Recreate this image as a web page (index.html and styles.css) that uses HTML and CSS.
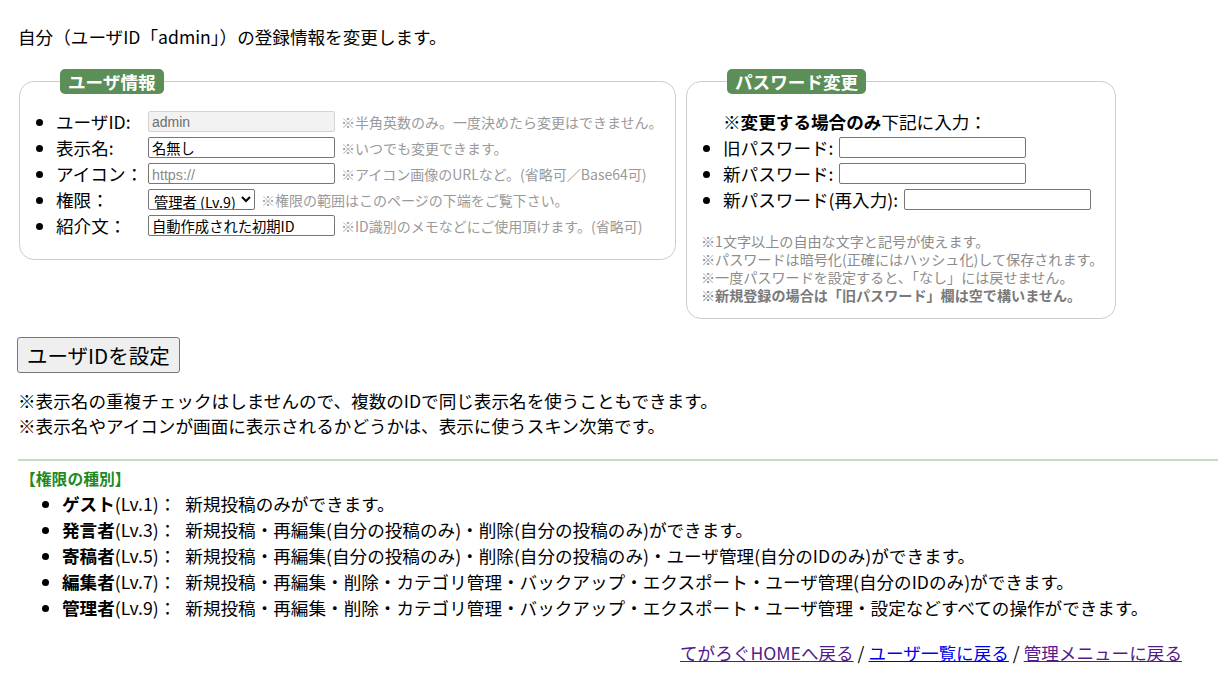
FILE: index.html
```html
<!DOCTYPE html>
<html lang="ja">
<head>
    <meta charset="UTF-8">
    <title>ユーザ情報の変更</title>
    <link rel="stylesheet" href="styles.css">
</head>
<body>
    <div class="wrap">
        <p class="lead">自分（ユーザID「admin」）の登録情報を変更します。</p>

        <form class="panels">
            <fieldset class="box box-user">
                <legend>ユーザ情報</legend>
                <ul class="fields">
                    <li>
                        <label class="lbl">ユーザID:</label>
                        <input type="text" class="txt" value="admin" disabled>
                        <span class="note">※半角英数のみ。一度決めたら変更はできません。</span>
                    </li>
                    <li>
                        <label class="lbl">表示名:</label>
                        <input type="text" class="txt" value="名無し">
                        <span class="note">※いつでも変更できます。</span>
                    </li>
                    <li>
                        <label class="lbl">アイコン：</label>
                        <input type="text" class="txt" placeholder="https://">
                        <span class="note">※アイコン画像のURLなど。(省略可／Base64可)</span>
                    </li>
                    <li>
                        <label class="lbl">権限：</label>
                        <select class="sel">
                            <option>管理者 (Lv.9)</option>
                        </select>
                        <span class="note">※権限の範囲はこのページの下端をご覧下さい。</span>
                    </li>
                    <li>
                        <label class="lbl">紹介文：</label>
                        <input type="text" class="txt" value="自動作成された初期ID">
                        <span class="note">※ID識別のメモなどにご使用頂けます。(省略可)</span>
                    </li>
                </ul>
            </fieldset>

            <fieldset class="box box-pass">
                <legend>パスワード変更</legend>
                <p class="only">※<b>変更する場合のみ</b>下記に入力：</p>
                <ul class="fields pass-fields">
                    <li>旧パスワード: <input type="password" class="txt"></li>
                    <li>新パスワード: <input type="password" class="txt"></li>
                    <li>新パスワード(再入力): <input type="password" class="txt"></li>
                </ul>
                <p class="pass-notes">
                    ※1文字以上の自由な文字と記号が使えます。<br>
                    ※パスワードは暗号化(正確にはハッシュ化)して保存されます。<br>
                    ※一度パスワードを設定すると、「なし」には戻せません。<br>
                    <b>※新規登録の場合は「旧パスワード」欄は空で構いません。</b>
                </p>
            </fieldset>
        </form>

        <button type="button" class="submit">ユーザIDを設定</button>

        <p class="remarks">
            ※表示名の重複チェックはしませんので、複数のIDで同じ表示名を使うこともできます。<br>
            ※表示名やアイコンが画面に表示されるかどうかは、表示に使うスキン次第です。
        </p>

        <hr class="sep">

        <p class="levels-title">【権限の種別】</p>
        <ul class="levels">
            <li><b>ゲスト</b>(Lv.1)：<span class="desc">新規投稿のみができます。</span></li>
            <li><b>発言者</b>(Lv.3)：<span class="desc">新規投稿・再編集(自分の投稿のみ)・削除(自分の投稿のみ)ができます。</span></li>
            <li><b>寄稿者</b>(Lv.5)：<span class="desc">新規投稿・再編集(自分の投稿のみ)・削除(自分の投稿のみ)・ユーザ管理(自分のIDのみ)ができます。</span></li>
            <li><b>編集者</b>(Lv.7)：<span class="desc">新規投稿・再編集・削除・カテゴリ管理・バックアップ・エクスポート・ユーザ管理(自分のIDのみ)ができます。</span></li>
            <li><b>管理者</b>(Lv.9)：<span class="desc">新規投稿・再編集・削除・カテゴリ管理・バックアップ・エクスポート・ユーザ管理・設定などすべての操作ができます。</span></li>
        </ul>

        <p class="backlinks">
            <a href="#" class="visited">てがろぐHOMEへ戻る</a> /
            <a href="#">ユーザ一覧に戻る</a> /
            <a href="#" class="visited">管理メニューに戻る</a>
        </p>
    </div>
</body>
</html>
```

FILE: styles.css
```css
body {
    margin: 0;
    font-family: "Noto Sans CJK JP", sans-serif;
    font-size: 17.6px;
    line-height: 26px;
    color: #000;
    background-color: #fff;
}
.wrap {
    padding-left: 18px;
}
.lead {
    margin: 24px 0 19px 0;
}
.panels {
    display: flex;
    align-items: flex-start;
    gap: 10px;
}
.box {
    margin: 0 0 0 1px;
    padding: 15px 0 20px 0;
    border: 1px solid #ccc;
    border-radius: 15px;
    box-sizing: border-box;
}
.box-user {
    width: 657px;
}
.box-pass {
    width: 430px;
    margin-left: 0;
    padding-bottom: 14px;
}
.box legend {
    margin-left: 40px;
    padding: 0 8px;
    background-color: #5b8f57;
    color: #fff;
    font-weight: bold;
    font-size: 17.6px;
    line-height: 25px;
    border-radius: 5px;
}
.fields {
    margin: 0;
    padding-left: 36px;
}
.fields li {
    height: 26px;
    white-space: nowrap;
}
.fields li > * {
    vertical-align: top;
}
.lbl {
    display: inline-block;
    width: 88px;
}
.txt {
    width: 187px;
    height: 21px;
    margin-top: 2px;
    box-sizing: border-box;
    padding: 0 3px;
    border: 1px solid #767676;
    border-radius: 2px;
    font-family: "Noto Sans CJK JP", sans-serif;
    font-size: 14.3px;
}
.txt:disabled {
    background-color: #f2f2f2;
    border-color: #d4d4d4;
    color: #6d6d6d;
    font-family: "Liberation Sans", sans-serif;
    font-size: 14px;
}
.txt::placeholder {
    color: #8a8a8a;
    font-family: "Liberation Sans", sans-serif;
}
.sel {
    height: 21px;
    width: 107px;
    margin-top: 2px;
    padding: 0 1px;
    border: 1px solid #767676;
    border-radius: 2px;
    font-family: "Noto Sans CJK JP", sans-serif;
    font-size: 14.3px;
    background-color: #fff;
}
.note {
    margin-left: 2px;
    color: #9a9a9a;
    font-size: 14px;
}
.only {
    margin: 0;
    padding-left: 36px;
}
.pass-fields li .txt {
    margin-left: 2px;
}
.pass-notes {
    margin: 19px 0 0 0;
    padding-left: 14px;
    color: #8c8c8c;
    font-size: 14.1px;
    line-height: 18px;
}
.pass-notes b {
    color: #7a7a7a;
}
.submit {
    margin-top: 18px;
    margin-left: -1px;
    height: 36px;
    padding: 0 9px;
    background-color: #efefef;
    border: 1px solid #767676;
    border-radius: 3px;
    font-family: "Noto Sans CJK JP", sans-serif;
    font-size: 20.5px;
    color: #000;
}
.remarks {
    margin: 15px 0 0 0;
    line-height: 25px;
}
.sep {
    margin: 21px 0 0 0;
    border: none;
    height: 2px;
    background-color: #c5dcc3;
}
.levels-title {
    margin: 5px 0 0 2px;
    color: #1f8a1f;
    font-weight: bold;
    font-size: 15.8px;
    line-height: 25px;
}
.levels {
    margin: 0;
    padding-left: 44px;
}
.levels li {
    white-space: nowrap;
}
.levels .desc {
    margin-left: 9px;
}
.backlinks {
    margin: 19px 0 0 0;
    padding-right: 36px;
    text-align: right;
}
.backlinks a {
    color: #0000ee;
}
.backlinks a.visited {
    color: #551a8b;
}
```
